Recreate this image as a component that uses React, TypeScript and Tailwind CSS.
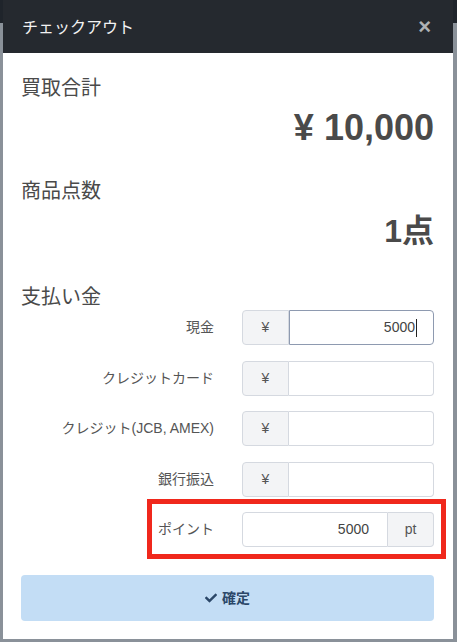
import React from "react";
import { FaCheck } from "react-icons/fa";

const font = {
  fontFamily: '"Liberation Sans", "Noto Sans CJK JP", sans-serif',
};

type Row = { label: string; value?: string; focused?: boolean };

const yenRows: Row[] = [
  { label: "現金", value: "5000", focused: true },
  { label: "クレジットカード" },
  { label: "クレジット(JCB, AMEX)" },
  { label: "銀行振込" },
];

function YenRow({ row }: { row: Row }) {
  return (
    <div className="flex items-center h-[35px]">
      <div className="flex-1 text-right pr-[28px] text-[14px] text-[#555]">
        {row.label}
      </div>
      <div className="flex w-[192px] h-[35px]">
        <div className="w-[47px] flex items-center justify-center bg-[#f3f4f6] border border-[#d5d9e0] rounded-l-[4px] text-[14px] text-[#555]">
          ¥
        </div>
        <div
          className={
            row.focused
              ? "flex-1 flex items-center justify-end pr-[16px] border border-[#8e9ab0] rounded-r-[4px] text-[14px] text-[#444]"
              : "flex-1 flex items-center justify-end pr-[16px] border border-l-0 border-[#d5d9e0] rounded-r-[4px] text-[14px] text-[#444]"
          }
        >
          {row.value}
          {row.focused && <span className="w-px h-[18px] bg-[#222] ml-px" />}
        </div>
      </div>
    </div>
  );
}

export default function App() {
  return (
    <div
      style={font}
      className="w-[457px] h-[642px] overflow-hidden bg-[linear-gradient(to_bottom,#1f242b_0,#1f242b_23px,#8a9199_23px)]"
    >
      <div className="mx-[3px] w-[450px] bg-white">
        {/* header */}
        <div className="h-[53px] bg-[#25292f] flex items-center justify-between pl-[19px] pr-[22px]">
          <div className="text-[16px] text-[#f2f2f2] pt-[2px]">チェックアウト</div>
          <div className="text-[22px] font-bold text-[#aeb1b5] leading-none">×</div>
        </div>

        {/* body */}
        <div className="pl-[18px] pr-[19px] pt-[23px] pb-[18px]">
          <div className="text-[20px] leading-[24px] text-[#4a4a4a]">買取合計</div>
          <div className="mt-[8px] text-right text-[36px] leading-[40px] font-bold text-[#4a4a4a]">
            ¥ 10,000
          </div>

          <div className="mt-[31px] text-[20px] leading-[24px] text-[#4a4a4a]">商品点数</div>
          <div className="mt-[8px] text-right text-[32px] leading-[40px] font-bold text-[#4a4a4a]">
            1点
          </div>

          <div className="mt-[34px] text-[20px] leading-[24px] text-[#4a4a4a]">支払い金</div>

          <div className="mt-[1px] flex flex-col gap-[15.5px]">
            {yenRows.map((r) => (
              <YenRow key={r.label} row={r} />
            ))}

            {/* points row, highlighted */}
            <div className="relative flex items-center h-[35px]">
              <div className="absolute -top-[13px] -bottom-[12px] left-[126px] -right-[12px] border-[5px] border-[#f0281c]" />
              <div className="flex-1 text-right pr-[28px] text-[14px] text-[#555]">ポイント</div>
              <div className="flex w-[192px] h-[35px]">
                <div className="flex-1 flex items-center justify-end pr-[18px] border border-[#d5d9e0] rounded-l-[4px] text-[14px] text-[#444]">
                  5000
                </div>
                <div className="w-[46px] flex items-center justify-center bg-[#f3f4f6] border border-l-0 border-[#d5d9e0] rounded-r-[4px] text-[14px] text-[#555]">
                  pt
                </div>
              </div>
            </div>
          </div>

          <button className="mt-[28px] w-full h-[46px] rounded-[4px] bg-[#c3ddf5] flex items-center justify-center gap-[5px] text-[14px] font-bold text-[#2b4768]">
            <FaCheck className="w-[12px] h-[12px]" />
            確定
          </button>
        </div>
      </div>
    </div>
  );
}
